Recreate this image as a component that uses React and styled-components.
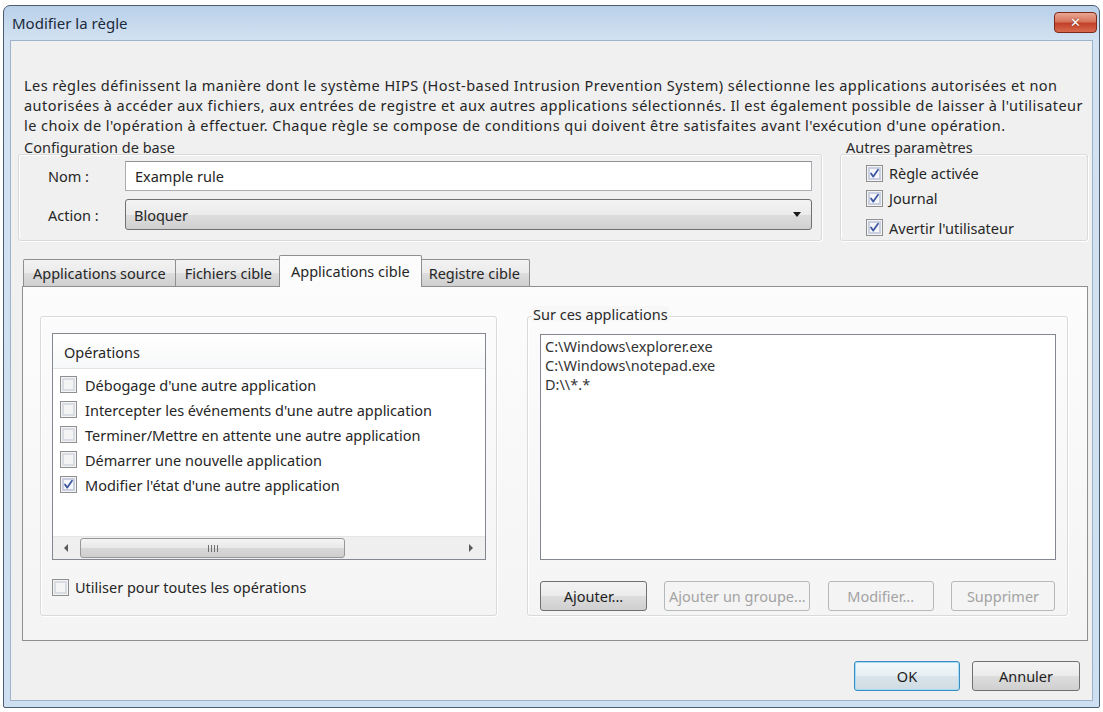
import React from 'react'
import styled, { createGlobalStyle, css } from 'styled-components'

const GlobalStyle = createGlobalStyle`
  html, body {
    margin: 0;
    padding: 0;
    background: #ffffff;
  }
  body {
    font-family: "Noto Sans", "Open Sans", sans-serif;
    font-size: 14.5px;
    color: #262626;
  }
  * { box-sizing: border-box; }
`

const Window = styled.div`
  margin: 5px 3px 0 3px;
  width: 1097px;
  height: 703px;
  border: 1px solid #4d5d70;
  border-radius: 7px 7px 2px 2px;
  background: linear-gradient(#b8d0e9, #d3e2f2 34px, #cddff1);
  padding: 0 6px 6px 6px;
  display: flex;
  flex-direction: column;
`

const TitleBar = styled.div`
  height: 34px;
  display: flex;
  align-items: flex-start;
  justify-content: space-between;
  padding: 0 0 0 2px;
`

const Title = styled.div`
  font-size: 15px;
  line-height: 34px;
  color: #1b2a3c;
`

const CloseButton = styled.div`
  margin: 6px -4px 0 0;
  width: 43px;
  height: 21px;
  border: 1px solid #7c2a1c;
  border-radius: 4px;
  background: linear-gradient(#e9a792, #d7755d 45%, #c2412a 55%, #d86a4e);
  display: flex;
  align-items: center;
  justify-content: center;
  color: #fff;
  font-family: "DejaVu Sans", sans-serif;
  font-weight: bold;
  font-size: 13px;
  text-shadow: 0 0 2px #7c2a1c;
`

const Client = styled.div`
  flex: 1;
  background: #f0f0f0;
  border: 1px solid #9db3cb;
  display: flex;
  flex-direction: column;
`

const Description = styled.div`
  padding: 34px 0 0 13px;
  line-height: 20px;
  letter-spacing: 0.45px;
  white-space: nowrap;
`

const TopRow = styled.div`
  margin-top: 4px;
  padding-left: 7px;
  display: flex;
  gap: 18px;
`

const Group = styled.div`
  width: ${p => p.w}px;
  display: flex;
  flex-direction: column;
`

const Legend = styled.div`
  align-self: flex-start;
  position: relative;
  z-index: 1;
  height: 16px;
  line-height: 16px;
  margin: 0 0 ${p => p.overlap}px 5px;
  padding: 0 1px;
  background: ${p => p.bg};
  color: #2a2a2a;
`

const GroupBox = styled.div`
  border: 1px solid #d9dadb;
  border-radius: 3px;
  box-shadow: inset 1px 1px 0 #ffffff, 1px 1px 0 #ffffff;
  height: ${p => p.h}px;
  padding: ${p => p.pad};
  display: flex;
  flex-direction: column;
`

const FieldRow = styled.div`
  display: flex;
  align-items: center;
  margin-bottom: ${p => p.mb || 0}px;
`

const FieldLabel = styled.div`
  width: 77px;
`

const TextInput = styled.div`
  flex: 1;
  height: 30px;
  border: 1px solid #abadb3;
  border-top-color: #8e9196;
  background: #fff;
  padding-left: 9px;
  line-height: 28px;
`

const Select = styled.div`
  flex: 1;
  height: 31px;
  border: 1px solid #707070;
  border-radius: 3px;
  background: linear-gradient(#f3f3f3, #ebebeb 50%, #dddddd 51%, #d0d0d0);
  padding: 0 10px 0 8px;
  display: flex;
  align-items: center;
  justify-content: space-between;
`

const DropArrow = styled.span`
  width: 0;
  height: 0;
  border-left: 4px solid transparent;
  border-right: 4px solid transparent;
  border-top: 5px solid #1a1a1a;
`

const CheckRow = styled.div`
  display: flex;
  align-items: center;
  height: ${p => p.h || 25}px;
  margin-top: ${p => p.mt || 0}px;
  gap: ${p => p.gap || 6}px;
  white-space: nowrap;
`

const Box = styled.span`
  width: 17px;
  height: 17px;
  flex: none;
  border: 1px solid #8f8f8f;
  background: #f4f4f4;
  box-shadow: inset 0 0 0 1px #f4f4f4, inset 0 0 0 3px #d9dce2;
  display: flex;
  align-items: center;
  justify-content: center;
  ${p => p.checked && css`
    background: #f6f7fb;
    box-shadow: inset 0 0 0 1px #f4f4f4, inset 0 0 0 3px #c9cfe0;
  `}
`

const Checkbox = ({ checked }) => (
  <Box checked={checked}>
    {checked && (
      <svg width="11" height="11" viewBox="0 0 11 11">
        <path d="M2 5.5 L4.3 8.6 L9 1.8" fill="none" stroke="#3f58a0" strokeWidth="1.8" strokeLinecap="round" strokeLinejoin="round" />
      </svg>
    )}
  </Box>
)

const TabArea = styled.div`
  margin: 14px 0 0 11px;
  width: 1066px;
  display: flex;
  flex-direction: column;
`

const TabStrip = styled.div`
  height: 31px;
  display: flex;
  align-items: flex-end;
  padding-left: 2px;
`

const Tab = styled.div`
  height: 27px;
  margin-left: -1px;
  padding: 0 9px;
  border: 1px solid #8e8f8f;
  border-bottom: none;
  border-radius: 2px 2px 0 0;
  background: linear-gradient(#f2f2f2, #ebebeb 50%, #dddddd 51%, #cfcfcf);
  line-height: 26px;
  white-space: nowrap;
  ${p => p.active && css`
    position: relative;
    z-index: 1;
    height: 32px;
    margin: 0 -2px -1px -3px;
    padding: 0 11px;
    background: #fcfcfc;
    line-height: 30px;
  `}
`

const TabPanel = styled.div`
  height: 355px;
  border: 1px solid #8e8f8f;
  background: linear-gradient(#fcfcfc, #f4f4f4);
  padding: 19px 19px 0 17px;
  display: flex;
  gap: 30px;
`

const ListBox = styled.div`
  width: ${p => p.w}px;
  height: ${p => p.h}px;
  border: 1px solid #828790;
  background: #ffffff;
  display: flex;
  flex-direction: column;
`

const ListHeader = styled.div`
  height: 35px;
  flex: none;
  padding-left: 11px;
  line-height: 37px;
  background: linear-gradient(#ffffff, #f7f8f9);
  border-bottom: 1px solid #e2e3e4;
`

const ListBody = styled.div`
  flex: 1;
  padding: 3px 0 0 7px;
`

const Scrollbar = styled.div`
  height: 23px;
  flex: none;
  background: #efefef;
  border-top: 1px solid #e6e6e6;
  display: flex;
  align-items: center;
  padding: 0 12px 0 11px;
`

const ArrowLeft = styled.span`
  width: 0;
  height: 0;
  border-top: 4px solid transparent;
  border-bottom: 4px solid transparent;
  border-right: 4px solid #5a5a5a;
`

const ArrowRight = styled.span`
  width: 0;
  height: 0;
  margin-left: auto;
  border-top: 4px solid transparent;
  border-bottom: 4px solid transparent;
  border-left: 4px solid #5a5a5a;
`

const Thumb = styled.div`
  margin-left: 12px;
  width: 265px;
  height: 20px;
  border: 1px solid #979797;
  border-radius: 3px;
  background: linear-gradient(#f4f4f4, #e8e8e8 50%, #d7d7d7 51%, #cfcfcf);
  display: flex;
  align-items: center;
  justify-content: center;
  gap: 2px;
`

const Grip = styled.span`
  width: 1px;
  height: 7px;
  background: #6f6f6f;
`

const PathList = styled.div`
  padding: 2px 0 0 4px;
  line-height: 19px;
  color: #333;
`

const ButtonRow = styled.div`
  margin-top: ${p => p.mt}px;
  display: flex;
  justify-content: ${p => p.justify};
  gap: ${p => p.gap || 0}px;
  padding-right: ${p => p.pr || 0}px;
`

const Button = styled.div`
  width: ${p => p.w}px;
  height: 30px;
  border: 1px solid #707070;
  border-radius: 3px;
  background: linear-gradient(#f3f3f3, #ebebeb 50%, #dddddd 51%, #cfcfcf);
  display: flex;
  align-items: center;
  justify-content: center;
  color: #1e1e1e;
  white-space: nowrap;
  ${p => p.disabled && css`
    border-color: #b5b9bc;
    background: #f4f4f4;
    color: #a3a3a3;
  `}
  ${p => p.primary && css`
    border-color: #3b8cbf;
    box-shadow: inset 0 0 0 1px #a6dcf6;
    background: linear-gradient(#f2f8fb, #e6eff4 50%, #d9e4ea 51%, #cfdce3);
  `}
`

const operations = [
  { label: "Débogage d'une autre application", checked: false },
  { label: "Intercepter les événements d'une autre application", checked: false },
  { label: "Terminer/Mettre en attente une autre application", checked: false },
  { label: "Démarrer une nouvelle application", checked: false },
  { label: "Modifier l'état d'une autre application", checked: true },
]

const paths = ['C:\\Windows\\explorer.exe', 'C:\\Windows\\notepad.exe', 'D:\\\\*.*']

const App = () => {
  return (
    <>
      <GlobalStyle />
      <Window>
        <TitleBar>
          <Title>Modifier la règle</Title>
          <CloseButton>✕</CloseButton>
        </TitleBar>
        <Client>
          <Description>
            <div>Les règles définissent la manière dont le système HIPS (Host-based Intrusion Prevention System) sélectionne les applications autorisées et non</div>
            <div>autorisées à accéder aux fichiers, aux entrées de registre et aux autres applications sélectionnés. Il est également possible de laisser à l'utilisateur</div>
            <div>le choix de l'opération à effectuer. Chaque règle se compose de conditions qui doivent être satisfaites avant l'exécution d'une opération.</div>
          </Description>

          <TopRow>
            <Group w={804}>
              <Legend overlap={-1} bg="transparent">Configuration de base</Legend>
              <GroupBox h={87} pad="6px 9px 0 29px">
                <FieldRow mb={8}>
                  <FieldLabel>Nom :</FieldLabel>
                  <TextInput>Example rule</TextInput>
                </FieldRow>
                <FieldRow>
                  <FieldLabel>Action :</FieldLabel>
                  <Select>
                    <span>Bloquer</span>
                    <DropArrow />
                  </Select>
                </FieldRow>
              </GroupBox>
            </Group>
            <Group w={248}>
              <Legend overlap={-1} bg="transparent">Autres paramètres</Legend>
              <GroupBox h={87} pad="6px 0 0 25px">
                <CheckRow><Checkbox checked />Règle activée</CheckRow>
                <CheckRow><Checkbox checked />Journal</CheckRow>
                <CheckRow mt={5}><Checkbox checked />Avertir l'utilisateur</CheckRow>
              </GroupBox>
            </Group>
          </TopRow>

          <TabArea>
            <TabStrip>
              <Tab>Applications source</Tab>
              <Tab>Fichiers cible</Tab>
              <Tab active>Applications cible</Tab>
              <Tab>Registre cible</Tab>
            </TabStrip>
            <TabPanel>
              <Group w={457}>
                <Legend overlap={-6} bg="transparent" />
                <GroupBox h={300} pad="16px 0 0 11px">
                  <ListBox w={434} h={227}>
                    <ListHeader>Opérations</ListHeader>
                    <ListBody>
                      {operations.map(op => (
                        <CheckRow key={op.label} gap={8}>
                          <Checkbox checked={op.checked} />
                          {op.label}
                        </CheckRow>
                      ))}
                    </ListBody>
                    <Scrollbar>
                      <ArrowLeft />
                      <Thumb>
                        <Grip /><Grip /><Grip /><Grip />
                      </Thumb>
                      <ArrowRight />
                    </Scrollbar>
                  </ListBox>
                  <CheckRow mt={17} h={20} gap={6}>
                    <Checkbox />
                    Utiliser pour toutes les opérations
                  </CheckRow>
                </GroupBox>
              </Group>
              <Group w={541}>
                <Legend overlap={-6} bg="#f7f7f7">Sur ces applications</Legend>
                <GroupBox h={300} pad="17px 12px 0 12px">
                  <ListBox w={516} h={226}>
                    <PathList>
                      {paths.map(p => <div key={p}>{p}</div>)}
                    </PathList>
                  </ListBox>
                  <ButtonRow mt={21} justify="space-between">
                    <Button w={107}>Ajouter...</Button>
                    <Button w={146} disabled>Ajouter un groupe...</Button>
                    <Button w={106} disabled>Modifier...</Button>
                    <Button w={104} disabled>Supprimer</Button>
                  </ButtonRow>
                </GroupBox>
              </Group>
            </TabPanel>
          </TabArea>

          <ButtonRow mt={20} justify="flex-end" gap={12} pr={12}>
            <Button w={106} primary>OK</Button>
            <Button w={108}>Annuler</Button>
          </ButtonRow>
        </Client>
      </Window>
    </>
  )
}

export default App
